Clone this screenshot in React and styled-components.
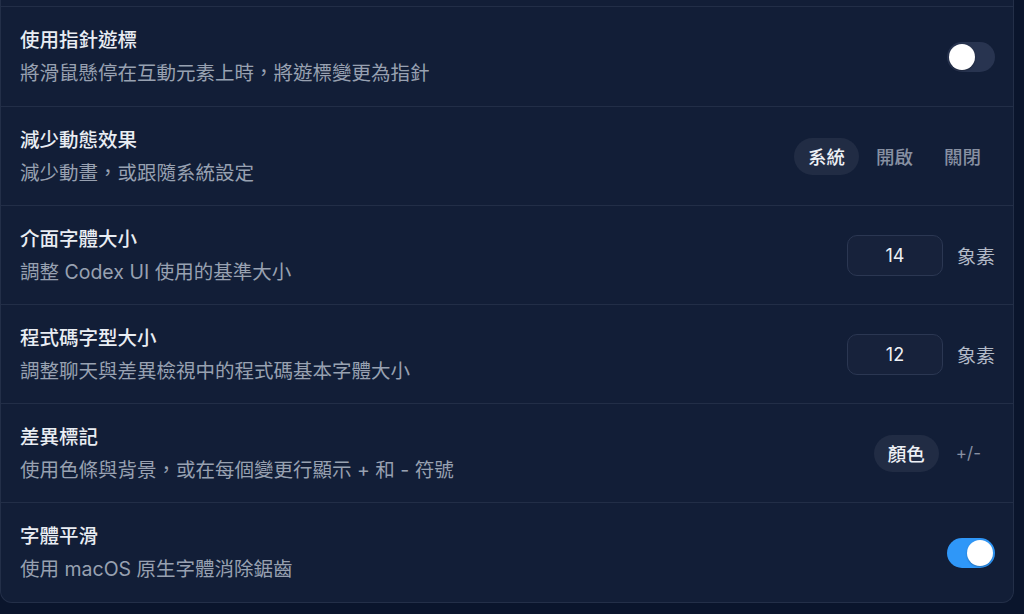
import React, { useState } from "react";
import styled, { createGlobalStyle } from "styled-components";

const Global = createGlobalStyle`
  html, body { margin: 0; padding: 0; background: #0a152c; }
  body {
    font-family: "Inter", "Noto Sans CJK TC", "Noto Sans", sans-serif;
    -webkit-font-smoothing: antialiased;
  }
`;

const Page = styled.div`
  width: 1024px;
  height: 614px;
  overflow: hidden;
  box-sizing: border-box;
  padding: 0 10px 0 0;
  background: #0a152c;
`;

const Card = styled.div`
  background: #121e37;
  border: 1px solid #232f48;
  border-top: none;
  border-radius: 0 0 12px 12px;
  box-sizing: border-box;
`;

const CutOff = styled.div`
  height: 6px;
`;

const Row = styled.div`
  display: flex;
  align-items: center;
  justify-content: space-between;
  padding: 0 18px 0 19px;
  border-top: 1px solid #222e47;
  height: 99px;
  box-sizing: border-box;
  &:nth-child(2), &:last-child { height: 100px; }
`;

const Texts = styled.div`
  display: flex;
  flex-direction: column;
  gap: 7px;
`;

const Title = styled.div`
  font-family: "Inter", "Noto Sans CJK TC", sans-serif;
  font-size: 19.5px;
  line-height: 26px;
  font-weight: 500;
  color: #e9edf3;
`;

const Desc = styled.div`
  font-family: "Inter", "Noto Sans CJK TC", sans-serif;
  font-size: 19.5px;
  line-height: 26px;
  font-weight: 400;
  color: #98a1b1;
`;

const Track = styled.button`
  width: 48px;
  height: 30px;
  border-radius: 15px;
  border: none;
  padding: 2px;
  display: flex;
  justify-content: ${(p) => (p.$on ? "flex-end" : "flex-start")};
  align-items: center;
  background: ${(p) => (p.$on ? "#2f97f8" : "#283450")};
  cursor: pointer;
  box-sizing: border-box;
`;

const Knob = styled.span`
  width: 26px;
  height: 26px;
  border-radius: 50%;
  background: #ffffff;
  box-shadow: 0 1px 2px rgba(0, 0, 0, 0.25);
`;

const Toggle = ({ on }) => {
  const [v, setV] = useState(on);
  return (
    <Track $on={v} onClick={() => setV(!v)}>
      <Knob />
    </Track>
  );
};

const Segments = styled.div`
  display: flex;
  align-items: center;
  gap: 3px;
`;

const Segment = styled.button`
  height: 37px;
  padding: 0 14px;
  border: none;
  border-radius: 19px;
  background: ${(p) => (p.$active ? "#212c44" : "transparent")};
  color: ${(p) => (p.$active ? "#eef1f6" : "#8790a2")};
  font-family: "Noto Sans CJK TC", sans-serif;
  font-size: 18.5px;
  font-weight: 500;
  cursor: pointer;
  white-space: nowrap;
`;

const SegLatin = styled(Segment)`
  font-family: "Inter", sans-serif;
  font-weight: 400;
  font-size: 17px;
`;

const NumberGroup = styled.div`
  display: flex;
  align-items: center;
  gap: 14px;
`;

const NumberBox = styled.div`
  width: 96px;
  height: 41px;
  box-sizing: border-box;
  border: 1.5px solid #2b3752;
  border-radius: 10px;
  background: #17223b;
  display: flex;
  align-items: center;
  justify-content: center;
  font-family: "Inter", sans-serif;
  font-size: 18px;
  color: #eef1f6;
`;

const Unit = styled.span`
  font-family: "Noto Sans CJK TC", sans-serif;
  font-size: 19px;
  color: #b3bac7;
`;

const Seg = ({ options, active }) => {
  const [a, setA] = useState(active);
  return (
    <Segments>
      {options.map((o, i) =>
        /^[\x00-\x7f]+$/.test(o) ? (
          <SegLatin key={o} $active={a === i} onClick={() => setA(i)}>
            {o}
          </SegLatin>
        ) : (
          <Segment key={o} $active={a === i} onClick={() => setA(i)}>
            {o}
          </Segment>
        )
      )}
    </Segments>
  );
};

const rows = [
  {
    title: "使用指針遊標",
    desc: "將滑鼠懸停在互動元素上時，將遊標變更為指針",
    control: <Toggle on={false} />,
  },
  {
    title: "減少動態效果",
    desc: "減少動畫，或跟隨系統設定",
    control: <Seg options={["系統", "開啟", "關閉"]} active={0} />,
  },
  {
    title: "介面字體大小",
    desc: "調整 Codex UI 使用的基準大小",
    control: (
      <NumberGroup>
        <NumberBox>14</NumberBox>
        <Unit>象素</Unit>
      </NumberGroup>
    ),
  },
  {
    title: "程式碼字型大小",
    desc: "調整聊天與差異檢視中的程式碼基本字體大小",
    control: (
      <NumberGroup>
        <NumberBox>12</NumberBox>
        <Unit>象素</Unit>
      </NumberGroup>
    ),
  },
  {
    title: "差異標記",
    desc: "使用色條與背景，或在每個變更行顯示 + 和 - 符號",
    control: <Seg options={["顏色", "+/-"]} active={0} />,
  },
  {
    title: "字體平滑",
    desc: "使用 macOS 原生字體消除鋸齒",
    control: <Toggle on={true} />,
  },
];

export default function App() {
  return (
    <>
      <Global />
      <Page>
        <Card>
          <CutOff />
          {rows.map((r) => (
            <Row key={r.title}>
              <Texts>
                <Title>{r.title}</Title>
                <Desc>{r.desc}</Desc>
              </Texts>
              {r.control}
            </Row>
          ))}
        </Card>
      </Page>
    </>
  );
}
